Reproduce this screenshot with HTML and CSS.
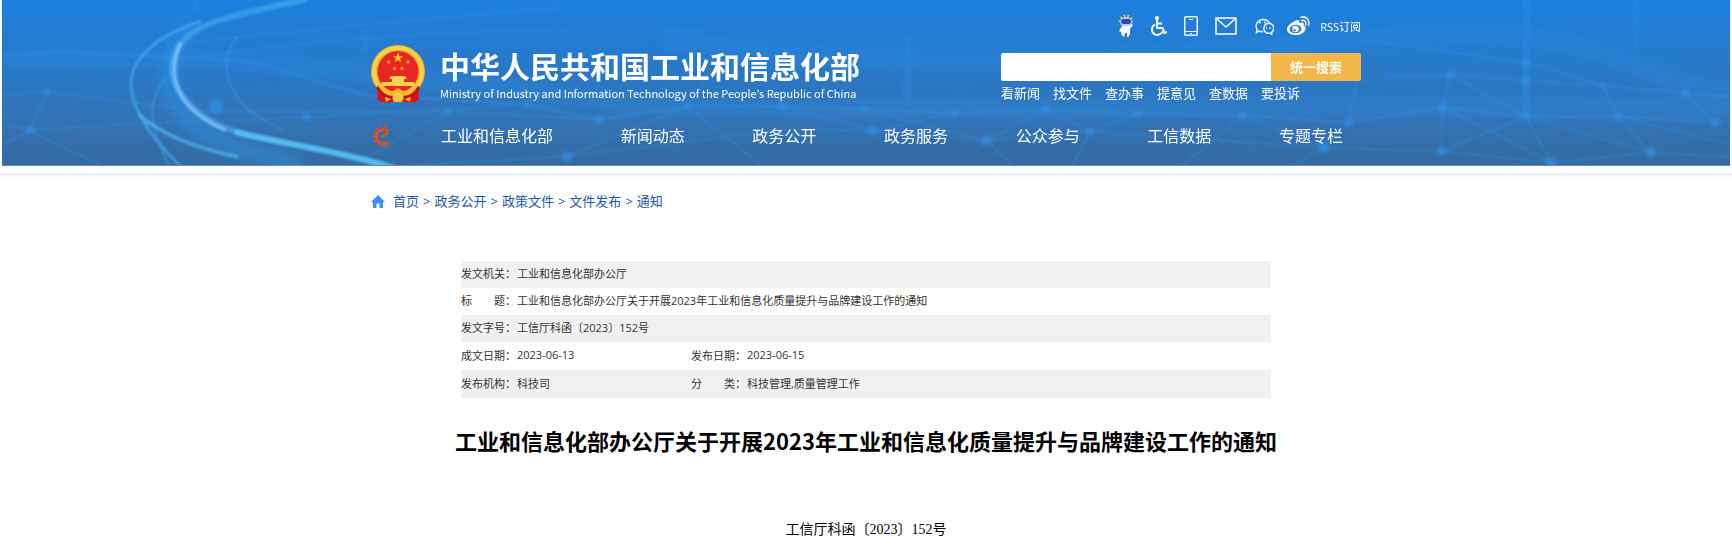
FILE: index.html
```
<!doctype html>
<html lang="zh-CN">
<head>
<meta charset="utf-8">
<title>工业和信息化部办公厅关于开展2023年工业和信息化质量提升与品牌建设工作的通知</title>
<link rel="stylesheet" href="styles.css">
</head>
<body>
<header class="header">
  <svg class="header-bg" viewBox="0 0 1728 166" preserveAspectRatio="xMidYMid slice" aria-hidden="true">
    <defs>
      <filter id="soft" x="-5%" y="-5%" width="110%" height="110%"><feGaussianBlur stdDeviation="1.2"/></filter>
      <filter id="dots" x="-5%" y="-5%" width="110%" height="110%"><feGaussianBlur stdDeviation="2"/></filter>
      <filter id="glow" x="-20%" y="-20%" width="140%" height="140%"><feGaussianBlur stdDeviation="7"/></filter>
    </defs>
    <g filter="url(#glow)" fill="none" stroke="#2b9bf5">
      <path d="M190 22C165 45 162 80 178 108S225 150 300 166" stroke-width="16" opacity=".45"/>
      <path d="M660 40C900 75 1100 60 1360 40S1600 70 1728 95" stroke-width="14" opacity=".25"/>
      <path d="M0 60C200 45 400 80 600 100S1200 100 1728 110" stroke-width="12" opacity=".3"/>
    </g>
    <!-- network mesh -->
    <g filter="url(#soft)" fill="none" stroke="#3a96ec" stroke-width="2" opacity=".32">
      <path d="M0 55L60 52L250 62L360 95L525 105L596 120L685 107L781 107L863 110L953 114L1043 110L1136 114L1241 116L1347 123L1441 108L1524 117L1616 117L1714 123" stroke-width="3"/>
      <path d="M180 60Q400 25 700 30"/><path d="M170 45Q300 30 560 8"/>
      <path d="M0 95L45 92L200 112L446 112L596 120M0 125L30 130L180 122L305 118L525 105M30 130L0 145M45 92L28 132L100 166"/>
      <path d="M350 166L446 112M400 166L565 157L781 130L871 131L984 141L1088 132L1322 148L1439 152L1549 163L1649 153L1728 158"/>
      <path d="M565 157L685 107L720 60M685 107L760 166M781 107L871 131L953 114M984 141L863 110M984 141L1010 166M984 141L1043 110L1088 132L1136 114M1070 166L1088 132M1180 166L1241 116L1322 148L1347 123L1355 80M1290 166L1322 148"/>
      <path d="M1360 40L1524 63L1601 86L1683 93L1728 98M1380 78L1448 75L1524 81L1683 93L1728 96M1448 75L1441 108L1439 152M1524 63L1524 117L1549 163M1439 152L1524 117M1601 86L1616 117L1649 153M1683 93L1714 123M1441 108L1549 163M1524 117L1649 153M1616 117L1728 145M1448 75L1524 117"/>
    </g>
    <g filter="url(#soft)" stroke="#3394f0" opacity=".25" stroke-width="8">
      <path d="M363 30V55M1524 0V115M1635 0V48M905 35V105M195 0V15"/>
    </g>
    <g filter="url(#dots)" fill="#3394f0" opacity=".7">
      <circle cx="28" cy="130" r="4"/><circle cx="45" cy="92" r="3"/><circle cx="305" cy="118" r="4"/><circle cx="446" cy="112" r="3"/><circle cx="525" cy="105" r="3"/><circle cx="596" cy="120" r="4"/><circle cx="565" cy="157" r="5"/><circle cx="685" cy="107" r="3"/><circle cx="781" cy="107" r="4"/><circle cx="863" cy="110" r="3"/><circle cx="871" cy="131" r="5"/><circle cx="953" cy="114" r="4"/><circle cx="984" cy="141" r="5"/><circle cx="1043" cy="110" r="4"/><circle cx="1088" cy="132" r="4"/><circle cx="1136" cy="114" r="4"/><circle cx="1241" cy="116" r="4"/><circle cx="1322" cy="148" r="5"/><circle cx="1347" cy="123" r="4"/><circle cx="1448" cy="75" r="4"/><circle cx="1441" cy="108" r="4"/><circle cx="1439" cy="152" r="4"/><circle cx="1524" cy="63" r="4"/><circle cx="1524" cy="81" r="4"/><circle cx="1524" cy="117" r="4"/><circle cx="1549" cy="163" r="5"/><circle cx="1601" cy="86" r="3"/><circle cx="1616" cy="117" r="4"/><circle cx="1649" cy="153" r="5"/><circle cx="1683" cy="93" r="4"/><circle cx="1714" cy="123" r="4"/><circle cx="214" cy="107" r="7"/>
    </g>
    <!-- light trails -->
    <g filter="url(#soft)" fill="none" stroke-linecap="round">
      <path d="M303 0C250 12 195 20 178 45S170 98 213 124C250 142 330 148 392 168" stroke="#4fb8f7" stroke-width="6" opacity=".5"/>
      <path d="M178 45C164 78 176 110 222 130" stroke="#8fc8fb" stroke-width="4" opacity=".7"/>
      <path d="M235 133C280 144 330 150 390 168" stroke="#5cccff" stroke-width="6" opacity=".7"/>
      <path d="M198 22C150 38 128 62 129 86S150 140 180 168" stroke="#43a9f2" stroke-width="3" opacity=".75"/>
      <path d="M164 78C148 98 142 118 168 168" stroke="#43a9f2" stroke-width="2" opacity=".5"/>
      <path d="M138 116C160 135 190 148 235 157" stroke="#55bff8" stroke-width="4" opacity=".6"/>
      <path d="M236 37C215 60 220 105 280 130" stroke="#43a0ee" stroke-width="2" opacity=".45"/>
    </g>
  </svg>
  <div class="wrap">
    <div class="top">
      <a class="brand" href="#">
        <svg class="emblem" viewBox="0 0 54 58" role="img" aria-label="国徽">
          <path d="M7 40L6 55Q13 59 20 57H34Q41 59 48 55L47 40Z" fill="#d61518"/>
          <ellipse cx="27" cy="26.500" rx="27" ry="26.500" fill="#eeb02c"/>
          <ellipse cx="27" cy="26.500" rx="24" ry="23.500" fill="none" stroke="#fbcf4c" stroke-width="4"/>
          <circle cx="27" cy="26.500" r="20.500" fill="#e9261f"/>
          <path d="M27 7.500l1.300 3.700h3.900L29 13.500l1.200 3.800L27 15l-3.200 2.300 1.200-3.800-3.200-2.300h3.900z" fill="#f6cb3d"/>
          <g fill="#e5ae35"><path id="st" d="M17.500 14.500l.7 1.700h1.800l-1.500 1.100.6 1.800-1.600-1.100-1.600 1.100.6-1.800-1.500-1.100h1.800z"/><use href="#st" x="19.500"/><use href="#st" x="6" y="6.500"/><use href="#st" x="13.500" y="6.500"/></g>
          <path d="M20 31h14l2 3h-3v3h10l1 4H10l1-4h10v-3h-3z" fill="#f9d34b"/>
          <path d="M6 38C14 46 17 47 22 46L27 43 32 46C37 47 40 46 48 38L47 44C42 49 37 51 32 50L27 47 22 50C17 51 12 49 7 44Z" fill="#f2b932"/>
          <path d="M6 42C10 49 15 53 22 52M48 42C44 49 39 53 32 52" fill="none" stroke="#c91015" stroke-width="3"/>
          <path d="M14 52l6 2-5 3zM40 52l-6 2 5 3zM21 52q6-4 12 0l-2 5h-8z" fill="#f5c63b"/>
        </svg>
        <span class="brand-text">
          <strong class="brand-cn">中华人民共和国工业和信息化部</strong>
          <span class="brand-en" lang="en">Ministry of Industry and Information Technology of the People’s Republic of China</span>
        </span>
      </a>
      <div class="side">
        <div class="tools">
          <a href="#" aria-label="智能问答"><svg width="16" height="24" viewBox="0 0 16 24"><path d="M2 8A6 6 0 0 1 14 8" fill="none" stroke="#e5cf3a" stroke-width="3" stroke-dasharray="1.500 2"/><ellipse cx="8" cy="8" rx="6" ry="5" fill="#b9cdf3"/><rect x="3" y="5" width="10" height="5" rx="2.500" fill="#3c3fc0"/><path d="M4 12h7l3-2 1 1-3 4v5l-2 3H9v-4H7v3H4l-1-4-2-1z" fill="#f3f6fc"/><path d="M4 22h3M9 23h2" stroke="#e2a548"/></svg></a>
          <a href="#" aria-label="无障碍"><svg width="16" height="20" viewBox="0 0 16 20" fill="none" stroke="#fff" stroke-width="2"><circle cx="6" cy="2" r="2" fill="#fff" stroke="none"/><path d="M6 4v8h5.500l2 5 2.500-1M6 7.500h5"/><path d="M4 8.500A5.500 5.500 0 1 0 11.500 15.500"/></svg></a>
          <a href="#" aria-label="移动版"><svg width="14" height="20" viewBox="0 0 14 20" fill="none" stroke="#e8f2fd"><rect x=".75" y=".75" width="12.500" height="18.500" rx="1" stroke-width="1.500"/><path d="M1 15.500h12M5 3.500h4M6 17.500h2"/></svg></a>
          <a href="#" aria-label="邮箱"><svg width="22" height="18" viewBox="0 0 22 18" fill="none" stroke="#fff" stroke-width="1.500"><rect x="1" y="1" width="20" height="16"/><path d="M2 2l9 8 9-8"/></svg></a>
          <a href="#" aria-label="微信"><svg width="20" height="18" viewBox="0 0 20 18" fill="none" stroke="#e8f2fd" stroke-width="1.500"><path d="M9 14.500Q7 15 5 14L2.500 15.500 3 12.500A7 6.500 0 1 1 15.500 6"/><path d="M17.500 15.500l.3 1.700-2-1A5 5 0 1 1 17.500 15.500Z"/><g fill="#fff" stroke="none"><circle cx="6" cy="5.500" r="1"/><circle cx="11" cy="5.500" r="1"/><circle cx="12.500" cy="11" r=".8"/><circle cx="16" cy="11" r=".8"/></g></svg></a>
          <a class="weibo" href="#" aria-label="微博"><svg width="23" height="20" viewBox="0 0 23 20"><path d="M8 5C11 3 13 4 12 7c4-1.500 5.500 0 4.500 2.500 5 2 1 9.500-8 9.500S-2 12.500 2.500 8.500Q5 6 8 5Z" fill="#fff"/><ellipse cx="8.500" cy="13" rx="6" ry="4.300" fill="#267bd2" transform="rotate(-8 8.500 13)"/><circle cx="8.500" cy="13" r="3.300" fill="#fff"/><circle cx="7.500" cy="14" r="1.200" fill="#267bd2"/><path d="M14.500 4.500c3-.8 5 1.500 4 4.500M14 1.200c5.500-1.500 9 3 7.500 8" fill="none" stroke="#e4effb" stroke-width="1.500" stroke-linecap="round"/></svg></a>
          <a class="rss" href="#">RSS订阅</a>
        </div>
        <form class="search">
          <input type="text" class="search-input" aria-label="搜索">
          <button type="button" class="search-btn">统一搜索</button>
        </form>
        <div class="quick">
          <a href="#">看新闻</a>
          <a href="#">找文件</a>
          <a href="#">查办事</a>
          <a href="#">提意见</a>
          <a href="#">查数据</a>
          <a href="#">要投诉</a>
        </div>
      </div>
    </div>
    <nav class="nav">
      <a class="nav-logo" href="#" aria-label="首页"><svg width="24" height="22" viewBox="0 0 24 22" fill="none"><path d="M17 20A10 10 0 1 1 17 2" stroke="#ee4a12" stroke-width="2" stroke-dasharray="2 2.500"/><path d="M17 16.500A7 7 0 1 1 13 4.500C18 4 18 9 10 11.500" stroke="#f04c14" stroke-width="2.500"/><path d="M8 12.500C9 16 19 14.500 24 5.500L20.500 6.500C18 11 13 13.500 8 12.500Z" fill="#1572c6"/></svg></a>
      <ul class="nav-list">
        <li><a href="#">工业和信息化部</a></li>
        <li><a href="#">新闻动态</a></li>
        <li><a href="#">政务公开</a></li>
        <li><a href="#">政务服务</a></li>
        <li><a href="#">公众参与</a></li>
        <li><a href="#">工信数据</a></li>
        <li><a href="#">专题专栏</a></li>
      </ul>
    </nav>
  </div>
</header>
<main class="main">
  <div class="wrap crumbs">
    <svg width="14" height="13" viewBox="0 0 14 13" fill="#3d8df5" aria-hidden="true"><path d="M7 0l7 7h-2v6H8.500V8.500h-3V13H2V7H0z"/></svg>
    <div class="crumb-list"><a href="#">首页</a><span>&gt;</span><a href="#">政务公开</a><span>&gt;</span><a href="#">政策文件</a><span>&gt;</span><a href="#">文件发布</a><span>&gt;</span><a href="#">通知</a></div>
  </div>
  <article class="article">
    <table class="info">
      <colgroup><col class="c-label"><col class="c-value"><col class="c-label"><col></colgroup>
      <tr><th>发文机关：</th><td colspan="3">工业和信息化部办公厅</td></tr>
      <tr><th>标　　题：</th><td colspan="3">工业和信息化部办公厅关于开展2023年工业和信息化质量提升与品牌建设工作的通知</td></tr>
      <tr><th>发文字号：</th><td colspan="3">工信厅科函〔2023〕152号</td></tr>
      <tr><th>成文日期：</th><td>2023-06-13</td><th>发布日期：</th><td>2023-06-15</td></tr>
      <tr><th>发布机构：</th><td>科技司</td><th>分　　类：</th><td>科技管理,质量管理工作</td></tr>
    </table>
    <h1 class="title">工业和信息化部办公厅关于开展2023年工业和信息化质量提升与品牌建设工作的通知</h1>
    <p class="doc-no">工信厅科函〔2023〕152号</p>
  </article>
</main>
</body>
</html>
```
FILE: styles.css
```
*{box-sizing:border-box}
body{margin:0;background:#fff;color:#333;font-family:"Open Sans","Noto Sans CJK SC",sans-serif;font-size:13px}
a{color:inherit;text-decoration:none}
a:hover{text-decoration:underline}
.wrap{max-width:990px;margin:0 auto}

.header{position:relative;overflow:hidden;margin:0 2px;color:#fff;background:linear-gradient(#1c80df,#2a78c6 45%,#3274b8 70%,#356a9f);border-bottom:1px solid #5c90c4}
.header-bg{position:absolute;inset:0;width:100%;height:100%}
.header .wrap{position:relative}
.top{display:flex;justify-content:space-between;padding-top:14px}
.brand{display:flex;align-items:flex-end;gap:15px;height:89px}
.emblem{width:54px;height:58px}
.brand-text{display:flex;flex-direction:column;font-family:"Noto Sans CJK SC",sans-serif;white-space:nowrap}
.brand-cn{font-size:30px;line-height:36px;font-weight:700}
.brand-en{font-family:"Noto Sans CJK KR",sans-serif;font-size:11px;line-height:20px}
.side{width:360px}
.tools{display:flex;align-items:center;justify-content:flex-end;gap:17px;height:24px}
.tools a{display:flex}
.tools .weibo{margin-left:-4px}
.tools .rss{font-size:11px;margin-left:-7px}
.search{display:flex;height:28px;margin-top:15px}
.search-input{flex:1;min-width:0;border:0;padding:0 8px;background:#fff;border-radius:2px 0 0 2px}
.search-btn{width:90px;border:0;padding:0 0 2px;background:#f3b648;color:#fff;font:bold 13px "Noto Sans CJK SC",sans-serif;border-radius:0 2px 2px 0;cursor:pointer}
.quick{display:flex;gap:13px;margin-top:2px;line-height:20px}
.nav{display:flex;align-items:center;height:24px;margin:21px 0 17px}
.nav-logo{display:flex;width:70px}
.nav-list{flex:1;display:flex;justify-content:space-between;list-style:none;margin:0;padding:0 18px 0 0;font-size:16px;line-height:24px}

.main{margin-top:7px;padding-top:17px;background:linear-gradient(#ebf2f8,#fff 8px)}
.crumbs{display:flex;align-items:center;gap:8px;line-height:22px;color:#1b58a5}
.crumb-list{display:flex;gap:4px}

.article{max-width:810px;margin:49px auto 0}
.info{width:100%;table-layout:fixed;border-collapse:collapse;font-size:11px}
.info th,.info td{height:27px;padding:0 0 3px;text-align:left;font-weight:400;white-space:nowrap}
.info tr:nth-child(n+4) td{height:28px}
.info tr:nth-child(odd){background:#f0f0f0}
.c-label{width:56px}
.c-value{width:174px}
.title{display:flex;justify-content:center;margin:26px 0 0;color:#000;font-family:"Noto Sans CJK SC",sans-serif;font-size:22px;line-height:32px;white-space:nowrap}
.doc-no{margin:63px 0 0;color:#000;font:14px/22px "Liberation Serif","Noto Sans CJK SC",serif;text-align:center}
```
